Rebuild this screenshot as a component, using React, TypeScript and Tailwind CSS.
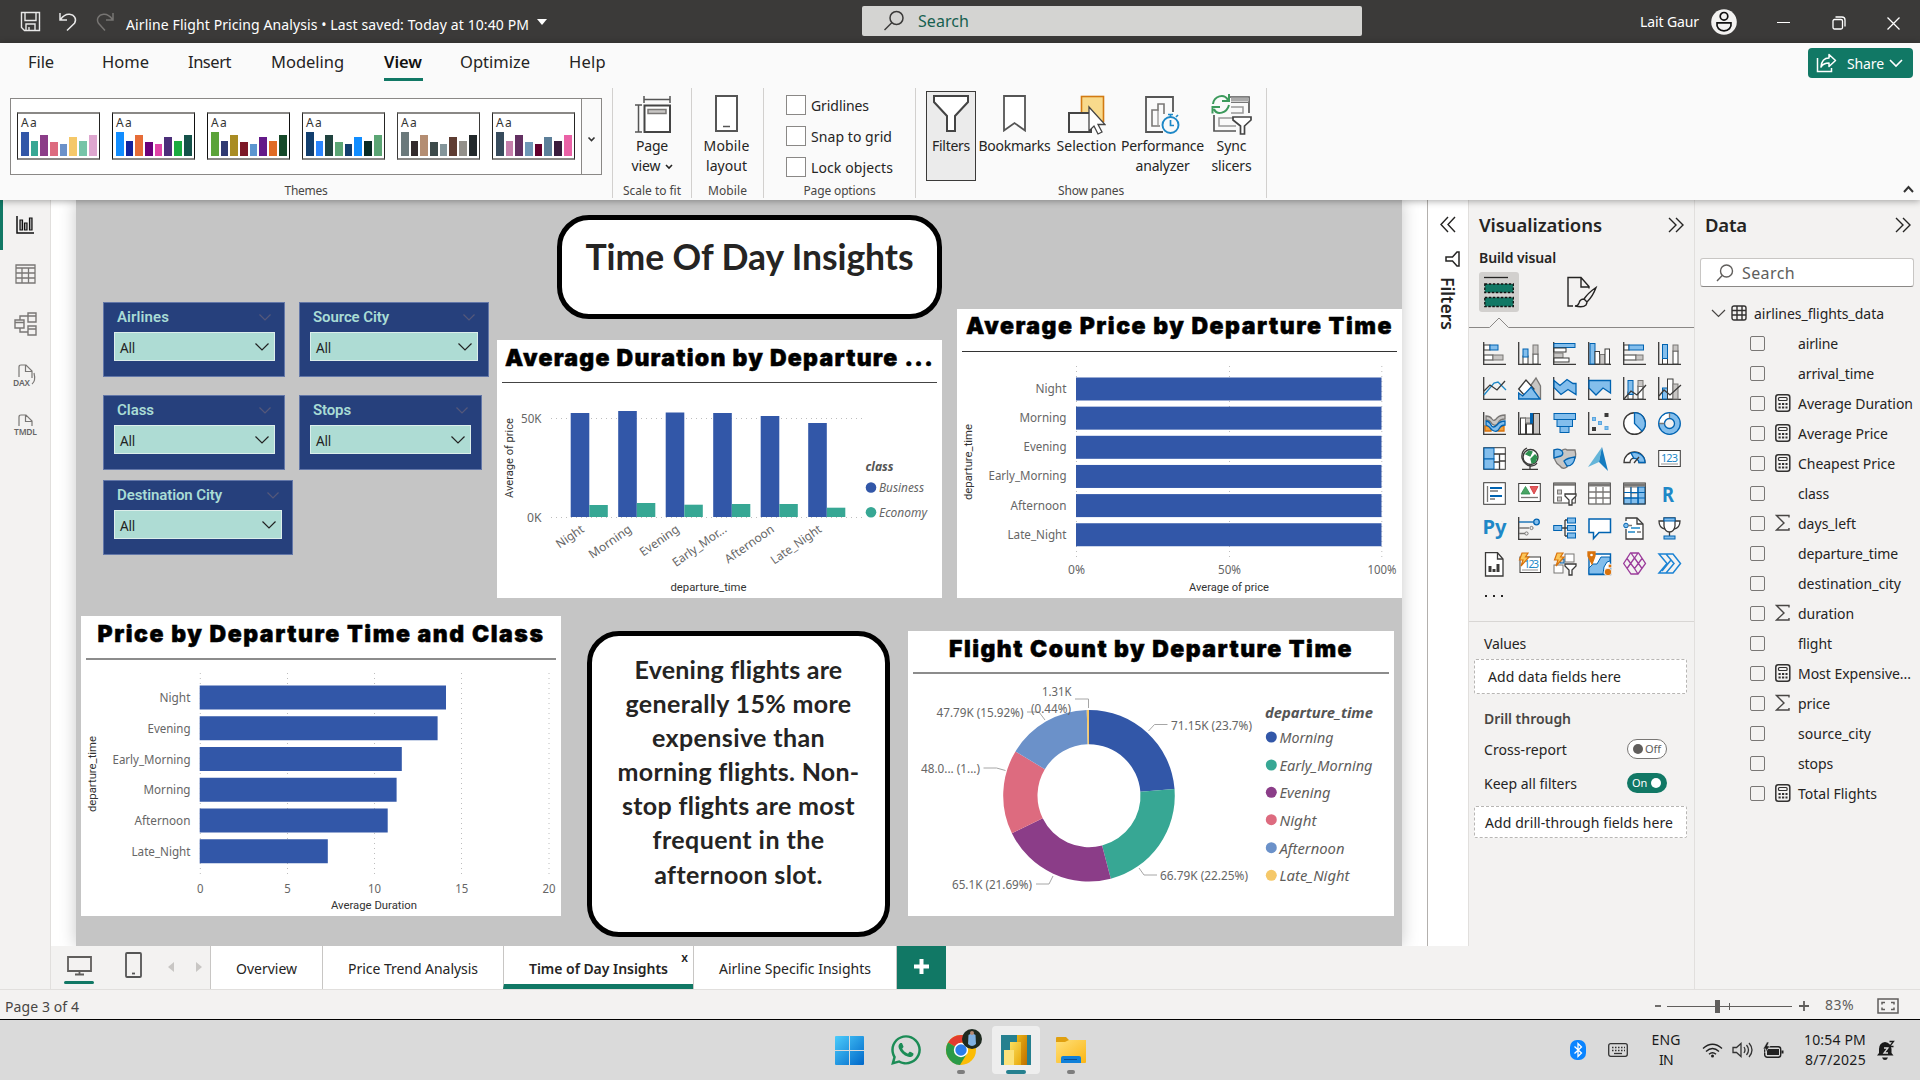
import React, { useLayoutEffect, useRef, useState } from "react";
import { FaWhatsapp } from "react-icons/fa";

const INK = "#3b3a39";
const BLUE = "#83beec";
const EDGE = "#0063b1";
const GREY = "#c8c6c4";
const MID = "#797775";

/* Text whose tracking is computed so that it fills a given width. */
function Fit({ w, className = "", children }: { w: number; className?: string; children: string }) {
  const ref = useRef<HTMLSpanElement>(null);
  const [ls, setLs] = useState(0);
  useLayoutEffect(() => {
    if (ref.current) setLs((w - ref.current.getBoundingClientRect().width) / children.length);
  }, [w, children]);
  return (
    <span ref={ref} className={"inline-block whitespace-pre " + className} style={{ letterSpacing: ls }}>
      {children}
    </span>
  );
}

/* ---------- title bar ---------- */
function TitleBar() {
  return (
    <header className="flex h-[43px] shrink-0 items-center bg-[#3b3a39] text-white">
      <svg className="ml-[20px]" width="21" height="21" viewBox="0 0 21 21" fill="none" stroke="#e8e8e8" strokeWidth="1.4">
        <path d="M1.5 1.5h18v18h-15l-3-3zM5 1.5v8h11v-8M6 19.500v-6.500h9v6.500M9 19v-3" />
      </svg>
      <svg className="ml-[17px]" width="20" height="21" viewBox="0 0 20 21" fill="none" stroke="#e8e8e8" strokeWidth="1.500">
        <path d="M2 2v7h7M2.500 8.500C5 5 8 3 11.500 3.300c5 .5 7.500 5 5 9L9 19.500" />
      </svg>
      <svg className="ml-[18px]" width="20" height="21" viewBox="0 0 20 21" fill="none" stroke="#777573" strokeWidth="1.500">
        <path d="M17 2v7h-7M16.500 8.500C14 5 11 3 7.500 3.300c-5 .5-7.500 5-5 9L9 19.500" />
      </svg>
      <Fit w={403} className="ml-[10px] mt-[6px] text-[14px] leading-5">Airline Flight Pricing Analysis • Last saved: Today at 10:40 PM</Fit>
      <span className="mt-px ml-[8px] h-0 w-0 border-x-[5px] border-t-[6px] border-x-transparent border-t-white" />
      <div className="mt-[-1px] ml-[315px] flex h-[30px] w-[500px] items-center rounded-[2px] bg-[#d4d4d2]">
        <svg className="ml-[21px]" width="22" height="22" viewBox="0 0 22 22" fill="none" stroke="#3b3a39" strokeWidth="1.500">
          <circle cx="13.500" cy="8" r="6.500" />
          <path d="M9 12.500L1.500 20" />
        </svg>
        <Fit w={51} className="ml-[13px] text-[16px] text-[#17604f]">Search</Fit>
      </div>
      <Fit w={59} className="ml-[278px] text-[14px]">Lait Gaur</Fit>
      <svg className="ml-[12px]" width="26" height="26" viewBox="0 0 26 26">
        <circle cx="13" cy="13" r="12.800" fill="#f3f2f1" />
        <circle cx="13" cy="7.300" r="3.800" fill="none" stroke="#111" strokeWidth="1.700" />
        <path d="M6 13.800h14c.8 4.800-2.500 8-7 8s-7.800-3.200-7-8z" fill="none" stroke="#111" strokeWidth="1.700" />
      </svg>
      <span className="mt-[2px] ml-[40px] h-[1.500px] w-[13px] bg-white" />
      <svg className="mt-[3px] ml-[42px]" width="14" height="14" viewBox="0 0 14 14" fill="none" stroke="#fff" strokeWidth="1.300">
        <rect x="1" y="3.500" width="9.500" height="9.500" rx="1.500" />
        <path d="M3.500 1h6.500a3 3 0 0 1 3 3v6.500" />
      </svg>
      <svg className="mt-[3px] ml-[41px]" width="13" height="13" viewBox="0 0 13 13" stroke="#fff" strokeWidth="1.300">
        <path d="M.5.5l12 12M12.500.5l-12 12" />
      </svg>
    </header>
  );
}

/* ---------- ribbon ---------- */
const themes = [
  { edge: "#252423", c: ["#3257a8", "#37a794", "#8b3d88", "#dd6b7f", "#6b91c9", "#f5c869", "#77c4a8", "#dea6cf"] },
  { edge: "#111", c: ["#118dff", "#12239e", "#e66c37", "#6b007b", "#e044a7", "#4c2f7a", "#1aab40", "#15524a"] },
  { edge: "#111", c: ["#5ba339", "#303a72", "#a98c23", "#7d1827", "#5c96d0", "#641a89", "#e06b24", "#16492a"] },
  { edge: "#252423", c: ["#123e6e", "#2b85ff", "#20433f", "#5ba574", "#123e6e", "#118dff", "#082b24", "#5ba574"] },
  { edge: "#3b3a39", c: ["#6b797b", "#332b2d", "#b48d72", "#3d4a4a", "#84959a", "#5e3c32", "#93908a", "#22282a"] },
  { edge: "#252423", c: ["#374b5c", "#c57eab", "#633062", "#6e97b6", "#63002d", "#5c7f99", "#3a1c3d", "#ea61a6"] },
];
const themeHeights = [24, 15, 21, 14, 12, 19, 15, 21];

function RibbonItem({ icon, width, lines, widths, active, caret }: { icon: React.ReactNode; width: string; lines: string[]; widths: number[]; active?: boolean; caret?: boolean }) {
  return (
    <div className={"mt-[3px] flex h-[90px] flex-col items-center " + width + (active ? " border border-[#3b3a39] bg-[#ebebeb]" : " pt-px")}>
      <div className="flex h-[44px] shrink-0 items-start justify-center pt-[3px]">{icon}</div>
      {lines.map((l, i) => (
        <span key={l} className="flex h-5 items-center whitespace-nowrap text-[14px] leading-5 text-[#252423]">
          <Fit w={widths[i]}>{l}</Fit>
          {caret && i === 1 && (
            <svg className="ml-[4px] mt-[2px]" width="8" height="6" viewBox="0 0 8 6" fill="none" stroke="#252423" strokeWidth="1.600"><path d="M1 1l3 3 3-3" /></svg>
          )}
        </span>
      ))}
    </div>
  );
}
function Group({ width, label, lw, children }: { width: string; label: string; lw: number; children: React.ReactNode }) {
  return (
    <div className={"flex h-[110px] shrink-0 flex-col border-r border-[#d2d0ce] " + width}>
      <div className="flex h-[95px] shrink-0">{children}</div>
      <div className="flex h-4 items-center justify-center text-[12px] leading-4 text-[#484644]"><Fit w={lw}>{label}</Fit></div>
    </div>
  );
}
const tabs: [string, number, string][] = [
  ["File", 26, "ml-[28px]"], ["Home", 47, "ml-[48px]"], ["Insert", 43, "ml-[39px]"], ["Modeling", 73, "ml-[40px]"],
  ["View", 38, "ml-[40px]"], ["Optimize", 70, "ml-[38px]"], ["Help", 37, "ml-[39px]"],
];
function Ribbon() {
  return (
    <section className="relative z-10 flex h-[157px] shrink-0 flex-col bg-[#fafafa] shadow-[0_1px_7px_rgba(0,0,0,0.35)]">
      <div className="flex h-[45px] shrink-0">
        {tabs.map(([t, w, ml]) => (
          <div key={t} className={"relative flex h-[38px] items-center " + ml}>
            <Fit w={w} className={"text-[16.500px] leading-[38px] " + (t === "View" ? "font-semibold text-[#111]" : "text-[#252423]")}>{t}</Fit>
            {t === "View" && <span className="absolute bottom-0 left-0 h-[3px] w-[39px] bg-[#117865]" />}
          </div>
        ))}
        <button className="mt-[5px] ml-auto mr-[7px] flex h-[30px] w-[105px] items-center rounded-[4px] bg-[#117865] text-white">
          <svg className="ml-[8px]" width="21" height="20" viewBox="0 0 21 20" fill="none" stroke="#fff" strokeWidth="1.500">
            <path d="M1.500 5v13.500h14V15" /><path d="M5 14c.5-6 3.500-9 8-9V1.500l6.500 6L13 13.500V10c-4 0-6.500 1.500-8 4z" strokeLinejoin="round" />
          </svg>
          <Fit w={37} className="ml-[10px] text-[14px]">Share</Fit>
          <svg className="ml-[5px]" width="14" height="9" viewBox="0 0 14 9" fill="none" stroke="#fff" strokeWidth="1.600"><path d="M1 1l6 6 6-6" /></svg>
        </button>
      </div>
      <div className="flex h-[112px]">
        <Group width="w-[613px]" label="Themes" lw={43}>
          <div className="mt-[10px] ml-[10px] flex h-[77px] w-[592px] border border-[#8a8886] bg-white">
            <div className="flex flex-1 gap-[12px] pt-[13px] pl-[6px]">
              {themes.map((t, i) => (
                <div key={i} className="flex h-[48px] w-[83px] shrink-0 flex-col border border-y-2 border-y-[#8a8886] bg-white pl-[3px]" style={{ borderLeftColor: t.edge, borderRightColor: t.edge }}>
                  <Fit w={17} className="h-[17px] self-start text-[12px] leading-[18px] text-[#333]">Aa</Fit>
                  <div className="flex h-[25px] items-end gap-[2px]">
                    {t.c.map((c, j) => <span key={j} className="w-[7.700px]" style={{ background: c, height: themeHeights[j] }} />)}
                  </div>
                </div>
              ))}
            </div>
            <div className="flex w-[20px] items-center justify-center border-l border-[#8a8886] bg-[#fafafa]">
              <svg className="mt-[6px]" width="9" height="7" viewBox="0 0 9 7" fill="none" stroke="#333" strokeWidth="1.600"><path d="M1.500 1.500l3 3 3-3" /></svg>
            </div>
          </div>
        </Group>
        <Group width="w-[79px]" label="Scale to fit" lw={58}>
          <RibbonItem width="w-[78px]" lines={["Page", "view"]} widths={[32, 29]} caret icon={
            <svg width="37" height="38" viewBox="0 0 37 38" fill="none" stroke="#555" strokeWidth="1.500">
              <path d="M10 1v7M36 1v7M10 4.500h26M1 10h7M1 37h7M4.500 10v27" />
              <rect x="10.500" y="10.500" width="25.500" height="26.500" stroke="#444" strokeWidth="2" fill="#fff" /><rect x="14" y="14.500" width="18" height="4" fill={GREY} stroke={MID} />
            </svg>} />
        </Group>
        <Group width="w-[72px]" label="Mobile" lw={39}>
          <RibbonItem width="w-[69px]" lines={["Mobile", "layout"]} widths={[46, 41]} icon={
            <svg width="23" height="37" viewBox="0 0 23 37" fill="#fff" stroke="#555" strokeWidth="2"><rect x="1" y="1" width="21" height="35" /><path d="M8 31.500h7" strokeWidth="1.500" /></svg>} />
        </Group>
        <Group width="w-[152px]" label="Page options" lw={72}>
          <div className="ml-[22px] flex flex-col gap-[11px] pt-[7px]">
            {([["Gridlines", 58], ["Snap to grid", 81], ["Lock objects", 82]] as [string, number][]).map(([t, w]) => (
              <div key={t} className="flex h-5 items-center gap-[5px] text-[14px] text-[#252423]">
                <span className="h-[20px] w-[20px] border border-[#8a8886] bg-white" />
                <Fit w={w}>{t}</Fit>
              </div>
            ))}
          </div>
        </Group>
        <Group width="w-[351px]" label="Show panes" lw={66}>
          <div className="flex pl-[10px]">
            <RibbonItem width="w-[50px]" active lines={["Filters"]} widths={[38]} icon={
              <svg width="36" height="37" viewBox="0 0 36 37" fill="#fff" stroke="#444" strokeWidth="2"><path d="M1 1h34v6L22 21v15h-8V21L1 7z" /></svg>} />
            <RibbonItem width="w-[77px]" lines={["Bookmarks"]} widths={[72]} icon={
              <svg width="23" height="37" viewBox="0 0 23 37" fill="#fff" stroke="#555" strokeWidth="1.800"><path d="M1 1h21v34.500l-10.500-7.500L1 35.500z" /></svg>} />
            <RibbonItem width="w-[67px]" lines={["Selection"]} widths={[60]} icon={
              <svg width="38" height="40" viewBox="0 0 38 40"><rect x="13.500" y="1.500" width="22" height="25" fill="#f8da8c" stroke="#d27a12" strokeWidth="1.600" />
                <rect x="1" y="18" width="22" height="19" fill="#fafafa" stroke="#444" strokeWidth="2" />
                <path d="M21 12v24l5-5 4 8 4-2-4-7.500h7z" fill="#fff" stroke="#444" strokeWidth="1.300" /></svg>} />
            <RibbonItem width="w-[85px]" lines={["Performance", "analyzer"]} widths={[83, 54]} icon={
              <svg width="36" height="40" viewBox="0 0 36 40" fill="none"><path d="M28 17V2H1v35h17" stroke="#555" strokeWidth="1.800" />
                <path d="M15 31H7V15h6V9h6v10" stroke={MID} strokeWidth="1.600" /><path d="M13 15v15" stroke={MID} />
                <circle cx="25.500" cy="30" r="8" stroke="#1e88c7" strokeWidth="1.900" /><path d="M25.500 25v5.500h3.500M23 19.500h5M25.500 20v2M31 22l2-2" stroke="#1e88c7" strokeWidth="1.700" /></svg>} />
            <RibbonItem width="w-[53px]" lines={["Sync", "slicers"]} widths={[30, 40]} icon={
              <svg className="mt-[-2px]" width="41" height="42" viewBox="0 0 41 42" fill="none"><path d="M19 4h19v16M3 22v16h22" stroke="#555" strokeWidth="1.700" /><path d="M20 6.500h18" stroke="#aaa" strokeWidth="4" /><path d="M20 9.500h18" stroke="#777" />
                <path d="M20 14h12v6H20M24 25H8v8h17" stroke="#999" strokeWidth="1.500" />
                <path d="M2 11C3 3 13 0 17 7M18 1v7h-7M18 12c-2 8-12 11-15 4M1.500 20.500V14H9" stroke="#3c9a5c" strokeWidth="2" />
                <path d="M22 24h18v3l-6.500 6v8h-4v-8L22 27z" fill="#fff" stroke="#444" strokeWidth="1.700" /></svg>} />
          </div>
        </Group>
        <svg className="mt-auto mr-[6px] mb-[7px] ml-auto" width="11" height="8" viewBox="0 0 11 8" fill="none" stroke="#333" strokeWidth="2"><path d="M1 7l4.500-5 4.500 5" /></svg>
      </div>
    </section>
  );
}

/* ---------- left navigation ---------- */
function LeftNav() {
  return (
    <nav className="flex w-[51px] shrink-0 flex-col border-r border-[#e1dfdd] bg-[#f3f2f1]">
      <div className="flex h-[50px] items-center border-l-[3px] border-[#117865] pl-[13px]">
        <svg width="18" height="18" viewBox="0 0 18 18" fill="none" stroke="#111" strokeWidth="1.500"><path d="M1 0v17h17" /><path d="M4 4h2.500v10H4zM8.500 7H11v7H8.500zM13.500 2H16v12h-2.500z" fill="#aaa" strokeWidth="1.200" /></svg>
      </div>
      <div className="flex h-[48px] items-center pl-[15px]">
        <svg width="21" height="20" viewBox="0 0 21 20" fill="none" stroke="#797775" strokeWidth="1.300"><path d="M1 1h19v18H1zM1 4h19M1 9h19M1 14h19M7 4v15M13.500 4v15" /></svg>
      </div>
      <div className="flex h-[52px] items-center pl-[14px]">
        <svg width="23" height="24" viewBox="0 0 23 24" fill="none" stroke="#797775" strokeWidth="1.400"><path d="M1 8h9v8H1zM14 1h8v9h-8zM14 14h8v9h-8zM1 10.500h9M14 4h8M14 17h8M6 8V4h8M6 16v4h8" /></svg>
      </div>
      <div className="flex h-[50px] items-center pl-[13px]">
        <svg width="24" height="23" viewBox="0 0 24 23" fill="none" stroke="#797775" strokeWidth="1.200"><path d="M6 13V3q0-2 2-2h5l6 6v7M12.500 1v6.500h6M21 9q2 8-2 11" />
          <text x="0" y="21.500" fontSize="8.500" textLength="17" fill="#666" stroke="none" className="font-['Noto_Sans'] font-semibold">DAX</text></svg>
      </div>
      <div className="flex h-[49px] items-center pl-[13px]">
        <svg width="25" height="22" viewBox="0 0 25 22" fill="none" stroke="#797775" strokeWidth="1.200"><path d="M6 12V3q0-2 2-2h5l6 6v5M12.500 1v6.500h6" />
          <text x="1" y="20.500" fontSize="8.500" textLength="23" fill="#666" stroke="none" className="font-['Noto_Sans'] font-semibold">TMDL</text></svg>
      </div>
    </nav>
  );
}

/* ---------- report canvas ---------- */
const SAX = "font-['Noto_Sans']";
const DIN = "font-['Roboto'] font-normal";

function Slicer({ pos, label, lw, field }: { pos: string; label: string; lw: number; field: string }) {
  return (
    <div className={"absolute h-[75px] border border-[#6377a8] bg-[#26407c] " + pos}>
      <div className="flex h-[29px] items-center justify-between pr-[13px] pl-[13px]">
        <Fit w={lw} className="font-['Roboto'] text-[15px] font-semibold text-[#a9dcd5]">{label}</Fit>
        <svg width="12" height="7" viewBox="0 0 12 7" fill="none" stroke="#55587a" strokeWidth="1.200"><path d="M.5.500L6 6l5.500-5.500" /></svg>
      </div>
      <div className={"ml-[10px] flex h-[29px] items-center justify-between border border-[#dceeeb] bg-[#aedcd4] px-[5px] " + field}>
        <Fit w={15} className="mt-[3px] font-['Noto_Sans'] text-[13.500px] text-[#222]">All</Fit>
        <svg width="14" height="8" viewBox="0 0 14 8" fill="none" stroke="#222" strokeWidth="1.200"><path d="M.5.500L7 7l6.500-6.500" /></svg>
      </div>
    </div>
  );
}
function VisualTitle({ children, w, className }: { children: string; w: number; className: string }) {
  return (
    <div className={"flex shrink-0 justify-center " + className}>
      <Fit w={w} className="font-['Inter'] text-[23px] leading-[30px] font-black text-black [-webkit-text-stroke:0.5px_#000]">{children}</Fit>
    </div>
  );
}
function Txt({ x, y, w, children, anchor = "start", size = 12, fill = "#666", cls = SAX, transform }: { x: number; y: number; w?: number; children: string; anchor?: "start" | "middle" | "end"; size?: number; fill?: string; cls?: string; transform?: string }) {
  return <text x={x} y={y} textLength={w} lengthAdjust="spacingAndGlyphs" textAnchor={anchor} fontSize={size} fill={fill} className={cls} transform={transform}>{children}</text>;
}
const dots = { stroke: "#bdbdbd", strokeDasharray: "1 4", strokeWidth: 1 };

function DurationChart() {
  const names: [string, number][] = [["Night", 31], ["Morning", 49], ["Evening", 45], ["Early_Mor...", 63], ["Afternoon", 57], ["Late_Night", 59]];
  const biz = [413, 411, 412.500, 413, 416, 423];
  const eco = [505, 503, 504.700, 504, 504, 507.700];
  return (
    <svg width="445" height="214" viewBox="497 384 445 214">
      <path d="M551 418.500H864M551 517.500H864" {...dots} />
      <Txt x={541.500} y={423} w={20.500} anchor="end">50K</Txt>
      <Txt x={541.500} y={522} w={14.500} anchor="end">0K</Txt>
      <Txt x={513} y={458} w={80} anchor="middle" size={11} fill="#333" cls={DIN} transform="rotate(-90 513 458)">Average of price</Txt>
      {names.map(([n, w], i) => (
        <g key={n}>
          <rect x={570.700 + 47.500 * i} y={biz[i]} width={18.600} height={517 - biz[i]} fill="#3257a8" />
          <rect x={589.300 + 47.500 * i} y={eco[i]} width={18.500} height={517 - eco[i]} fill="#37a794" />
          <Txt x={585 + 47.500 * i} y={531} w={w} anchor="end" transform={`rotate(-35 ${585 + 47.500 * i} 531)`}>{n}</Txt>
        </g>
      ))}
      <Txt x={708.500} y={591} w={76} anchor="middle" size={11} fill="#333" cls={DIN}>departure_time</Txt>
      <Txt x={865.500} y={471} w={28} size={12} fill="#555" cls="font-['Noto_Sans'] italic font-bold">class</Txt>
      <circle cx="871" cy="487.500" r="5.300" fill="#3257a8" />
      <Txt x={879} y={492} w={45} cls="font-['Noto_Sans'] italic">Business</Txt>
      <circle cx="871" cy="512.300" r="5.300" fill="#37a794" />
      <Txt x={879} y={517} w={48} cls="font-['Noto_Sans'] italic">Economy</Txt>
    </svg>
  );
}
function PriceChart() {
  const names: [string, number][] = [["Night", 31], ["Morning", 47], ["Evening", 43], ["Early_Morning", 78], ["Afternoon", 56], ["Late_Night", 59]];
  return (
    <svg width="445" height="246" viewBox="957 352 445 246">
      <path d="M1076.500 366V560M1229.500 366V560M1381.800 366V560" {...dots} />
      {names.map(([n, w], i) => (
        <g key={n}>
          <rect x={1076} y={377.500 + 29.150 * i} width={305.500} height={23} fill="#3257a8" />
          <Txt x={1066.500} y={393 + 29.150 * i} w={w} anchor="end">{n}</Txt>
        </g>
      ))}
      <Txt x={1076.500} y={574} w={17} anchor="middle">0%</Txt>
      <Txt x={1229.500} y={574} w={23} anchor="middle">50%</Txt>
      <Txt x={1382} y={574} w={29} anchor="middle">100%</Txt>
      <Txt x={1229} y={591} w={80} anchor="middle" size={11} fill="#333" cls={DIN}>Average of price</Txt>
      <Txt x={972} y={462} w={76} anchor="middle" size={11} fill="#333" cls={DIN} transform="rotate(-90 972 462)">departure_time</Txt>
    </svg>
  );
}
function ClassChart() {
  const rows: [string, number, number][] = [["Night", 31, 446], ["Evening", 43, 437.600], ["Early_Morning", 78, 401.800], ["Morning", 47, 396.600], ["Afternoon", 56, 387.700], ["Late_Night", 59, 327.800]];
  return (
    <svg width="480" height="256" viewBox="81 660 480 256">
      <path d="M200.300 673V878M287.500 673V878M374.500 673V878M461.500 673V878M549 673V878" {...dots} />
      {rows.map(([n, w, end], i) => (
        <g key={n}>
          <rect x={199.700} y={685.500 + 30.750 * i} width={end - 199.700} height={24} fill="#3257a8" />
          <Txt x={190.500} y={702 + 30.750 * i} w={w} anchor="end">{n}</Txt>
        </g>
      ))}
      {[0, 5, 10, 15, 20].map((v) => <Txt key={v} x={200.300 + 17.430 * v} y={892.500} w={v < 10 ? 6.500 : 13} anchor="middle">{String(v)}</Txt>)}
      <Txt x={374} y={909} w={86} anchor="middle" size={11} fill="#333" cls={DIN}>Average Duration</Txt>
      <Txt x={95.500} y={774} w={76} anchor="middle" size={11} fill="#333" cls={DIN} transform="rotate(-90 95.5 774)">departure_time</Txt>
    </svg>
  );
}
const slices: [string, string, number][] = [
  ["Morning", "#3257a8", 54], ["Early_Morning", "#37a794", 93], ["Evening", "#8b3d88", 51],
  ["Night", "#dd6b7f", 37], ["Afternoon", "#6b91c9", 65], ["Late_Night", "#f5c869", 70],
];
const SWEEP = [0, 85.5, 165.3, 244.0, 301.0, 358.5, 360];
function arc(a: number, b: number) {
  const cx = 1089, cy = 795.700, R = 85.800, r = 51.500;
  const p = (d: number, q: number) => `${cx + q * Math.sin((d * Math.PI) / 180)} ${cy - q * Math.cos((d * Math.PI) / 180)}`;
  return `M${p(a, R)}A${R} ${R} 0 0 1 ${p(b, R)}L${p(b, r)}A${r} ${r} 0 0 0 ${p(a, r)}Z`;
}
function DonutChart() {
  const legendY = [737, 765, 792.300, 819.700, 847.700, 875.300];
  return (
    <svg width="486" height="242" viewBox="908 674 486 242">
      {slices.map(([n, c, w], i) => (
        <g key={n}>
          <path d={arc(SWEEP[i], SWEEP[i + 1])} fill={c} />
          <circle cx="1271.300" cy={legendY[i]} r="5.500" fill={c} />
          <Txt x={1279.500} y={legendY[i] + 6} w={w} size={14} fill="#5f5e5c" cls="font-['Noto_Sans'] italic">{n}</Txt>
        </g>
      ))}
      <Txt x={1265} y={717.500} w={108} size={14} fill="#555" cls="font-['Noto_Sans'] italic font-bold">departure_time</Txt>
      <path d="M1148.500 731l6-6.500h13M1139 868l5 7h13M1053 876l-4 8h-13M1005.500 770.500l-9-2.500h-13M1045 720l-6-8h-12M1088.500 708v-9h-13.500" fill="none" stroke="#a6a6a6" />
      <Txt x={1171} y={730} w={81}>71.15K (23.7%)</Txt>
      <Txt x={1160} y={880} w={88}>66.79K (22.25%)</Txt>
      <Txt x={952} y={889} w={80}>65.1K (21.69%)</Txt>
      <Txt x={921} y={773} w={59}>48.0... (1...)</Txt>
      <Txt x={936.500} y={717} w={87}>47.79K (15.92%)</Txt>
      <Txt x={1042} y={696} w={29.500}>1.31K</Txt>
      <Txt x={1031} y={713} w={40}>(0.44%)</Txt>
    </svg>
  );
}
const note: [string, number][] = [
  ["Evening flights are", 208], ["generally 15% more", 226], ["expensive than", 173], ["morning flights. Non-", 242],
  ["stop flights are most", 233], ["frequent in the", 172], ["afternoon slot.", 168],
];
function Canvas() {
  return (
    <div className="flex min-w-0 flex-1 overflow-hidden bg-white">
      <div className="relative ml-[25px] h-[746px] w-[1326px] shrink-0 bg-[#c5c5c5] shadow-[0_0_16px_rgba(0,0,0,0.22)]">
        <Slicer pos="left-[27px] top-[102px] w-[182px]" label="Airlines" lw={52} field="w-[161px]" />
        <Slicer pos="left-[223px] top-[102px] w-[190px]" label="Source City" lw={76} field="w-[168px]" />
        <Slicer pos="left-[27px] top-[195px] w-[182px]" label="Class" lw={37} field="w-[161px]" />
        <Slicer pos="left-[223px] top-[195px] w-[183px]" label="Stops" lw={38} field="w-[161px]" />
        <Slicer pos="left-[27px] top-[280px] w-[190px]" label="Destination City" lw={105} field="w-[168px]" />

        <div className="absolute left-[481px] top-[15px] flex h-[104px] w-[385px] justify-center rounded-[32px] border-[5px] border-black bg-white pt-[15px]">
          <Fit w={328} className="font-['Lato'] text-[35.500px] leading-[44px] font-bold text-[#252423]">Time Of Day Insights</Fit>
        </div>

        <div className="absolute left-[421px] top-[140px] flex h-[258px] w-[445px] flex-col bg-white">
          <VisualTitle w={429} className="h-[42px] pt-[3px]">Average Duration by Departure ...</VisualTitle>
          <div className="mx-[5px] h-[2px] shrink-0 border-t border-[#444]" />
          <DurationChart />
        </div>
        <div className="absolute left-[881px] top-[109px] flex h-[289px] w-[445px] flex-col bg-white">
          <VisualTitle w={427} className="h-[42px] pt-[2px]">Average Price by Departure Time</VisualTitle>
          <div className="mx-[5px] h-px shrink-0 bg-[#333]" />
          <PriceChart />
        </div>
        <div className="absolute left-[5px] top-[416px] flex h-[300px] w-[480px] flex-col bg-white">
          <VisualTitle w={447} className="h-[42px] pt-[3px]">Price by Departure Time and Class</VisualTitle>
          <div className="mx-[5px] h-[2px] shrink-0 bg-[#8c8c8c]" />
          <ClassChart />
        </div>
        <div className="absolute left-[511px] top-[431px] flex h-[306px] w-[303px] flex-col items-center rounded-[32px] border-[5px] border-black bg-white pt-[16px]">
          {note.map(([t, w]) => <Fit key={t} w={w} className="h-[34.100px] font-['Lato'] text-[25px] leading-[34.100px] font-bold text-[#252423]">{t}</Fit>)}
        </div>
        <div className="absolute left-[832px] top-[431px] flex h-[285px] w-[486px] flex-col bg-white">
          <VisualTitle w={404} className="h-[41px] pt-[3px]">Flight Count by Departure Time</VisualTitle>
          <div className="mx-[5px] h-[2px] shrink-0 bg-[#8c8c8c]" />
          <DonutChart />
        </div>
      </div>
    </div>
  );
}
function PageTabs() {
  return (
    <div className="flex h-[43px] shrink-0 bg-[#f3f2f1] text-[14px] text-[#252423]">
      <div className="flex w-[159px] shrink-0">
        <div className="ml-[13px] flex w-[30px] flex-col items-center pt-[9px]">
          <svg width="25" height="21" viewBox="0 0 25 21" fill="none" stroke="#605e5c" strokeWidth="1.800"><path d="M1 2h23v14H1zM8 19.500h9M12.500 16v3" /></svg>
          <span className="mt-[5px] h-[3px] w-[30px] rounded bg-[#117865]" />
        </div>
        <svg className="mt-[6px] ml-[31px]" width="17" height="26" viewBox="0 0 17 26" fill="none" stroke="#555" strokeWidth="1.800"><rect x="1" y="1" width="15" height="24" rx="1" /><path d="M7 21.500h3" /></svg>
        <span className="mt-[16px] ml-[26px] h-0 w-0 border-y-[5.500px] border-r-[6px] border-y-transparent border-r-[#c8c6c4]" />
        <span className="mt-[16px] ml-[22px] h-0 w-0 border-y-[5.500px] border-l-[6px] border-y-transparent border-l-[#c8c6c4]" />
      </div>
      <div className="flex w-[112px] shrink-0 items-center justify-center border-l border-[#c8c6c4] bg-white pt-[2px]"><Fit w={61}>Overview</Fit></div>
      <div className="flex w-[181px] shrink-0 items-center justify-center border-l border-[#c8c6c4] bg-white pt-[2px]"><Fit w={130}>Price Trend Analysis</Fit></div>
      <div className="relative flex w-[190px] shrink-0 items-center justify-center border-b-[5px] border-l border-b-[#117865] border-l-[#c8c6c4] bg-white pt-[7px]">
        <Fit w={139} className="font-semibold">Time of Day Insights</Fit>
        <span className="absolute top-[4px] right-[5px] text-[12px] leading-4 font-semibold">x</span>
      </div>
      <div className="flex w-[204px] shrink-0 items-center justify-center border-x border-[#c8c6c4] bg-white pt-[2px]"><Fit w={152}>Airline Specific Insights</Fit></div>
      <div className="flex w-[49px] shrink-0 items-center justify-center bg-[#117865]">
        <svg className="mb-[3px]" width="15" height="15" viewBox="0 0 15 15"><path d="M5.500 0h4v5.500H15v4H9.500V15h-4V9.500H0v-4h5.500z" fill="#fff" /></svg>
      </div>
    </div>
  );
}
function FiltersPane() {
  return (
    <aside className="flex w-[42px] shrink-0 flex-col items-center border-x border-l-[#b3b0ad] border-r-[#e1dfdd] bg-white">
      <svg className="mt-[16px]" width="16" height="17" viewBox="0 0 16 17" fill="none" stroke="#252423" strokeWidth="1.400"><path d="M8 1L1 8.500 8 16M15 1L8 8.500l7 7.500" /></svg>
      <svg className="mt-[18px] ml-[8px]" width="15" height="16" viewBox="0 0 15 16" fill="none" stroke="#252423" strokeWidth="1.500"><path d="M14 1v14h-2L7.500 10H1V6h6.500L12 1z" /></svg>
      <span className="mt-[10px] h-[54px] [writing-mode:vertical-rl] text-[17.500px] leading-6 font-semibold whitespace-nowrap text-[#252423]">Filters</span>
    </aside>
  );
}

/* ---------- visualization gallery ---------- */
const R = (x: number, y: number, w: number, h: number, fill: string, stroke = INK) => <rect x={x} y={y} width={w} height={h} fill={fill} stroke={stroke} />;
const L = (d: string, stroke = INK, fill = "none", sw = 1.3) => <path d={d} stroke={stroke} fill={fill} strokeWidth={sw} />;
const axes = L("M.7 0v22.300H23");
const bolt = L("M4 1h6L7.500 5H11L3 14l2-6H1.500z", "#d9730d", "#fbc658", 1.2);
const W = "#fff";
const gallery: React.ReactNode[] = [
  <>{axes}{R(1, 3, 6, 5, W)}{R(7, 3, 8, 5, BLUE, EDGE)}{R(1, 13, 9, 5, W)}{R(10, 13, 10, 5, GREY, MID)}</>,
  <>{axes}{R(5, 14, 5, 8, W)}{R(5, 7, 5, 8, BLUE, EDGE)}{R(15, 12, 5, 10, W)}{R(15, 3, 5, 9, GREY, MID)}</>,
  <>{axes}{R(1, 1.500, 21, 4, BLUE, EDGE)}{R(1, 6, 12, 4, W)}{R(1, 11, 9, 5, GREY, MID)}{R(1, 16, 15, 4, W)}</>,
  <>{axes}{R(2, 1.500, 5, 20.500, BLUE, EDGE)}{R(7, 9.500, 4.500, 12.500, W)}{R(12, 12.500, 5, 9.500, GREY, MID)}{R(17, 7, 4.500, 15, W)}</>,
  <>{axes}{R(1, 3, 5, 5, W)}{R(6, 3, 14.500, 5, BLUE, EDGE)}{R(1, 13, 12, 5, W)}{R(13, 13, 7, 5, GREY, MID)}</>,
  <>{axes}{R(4.500, 16, 5, 6, W)}{R(4.500, 2.500, 5, 14, BLUE, EDGE)}{R(15, 9, 5, 13, W)}{R(15, 3, 5, 6, GREY, MID)}</>,
  <>{axes}{L("M1 18L11 6l4-1 4 4 4 4", "#1e88c7")}{L("M1 14l6-6 7 5 8-9")}</>,
  <>{L("M13 21.500V8L18 1l4.500 8v12.500z", MID, GREY)}{L("M.7 12L8 3l8 9-8 8z", INK, W)}{L("M.7 22V16l4 3 8.500-9L22 22z", EDGE, BLUE)}</>,
  <>{axes}{L("M1 3.500l6 5 7-6 6 4h3v11l-8-5-7 5-7-7z", EDGE, BLUE)}</>,
  <>{axes}{L("M1 3.500h21.500V16L15 11 8 18 1 11z", EDGE, BLUE)}</>,
  <>{axes}{R(5, 15, 5, 7, W)}{R(5, 3.500, 5, 14, BLUE, EDGE)}{R(15, 9, 5, 13, W)}{R(15, 3.500, 5, 6, GREY, MID)}{L("M1 22L8 14l6 4 9-10")}</>,
  <>{axes}{R(4.500, 11, 5, 11, BLUE, EDGE)}{R(9.500, 2, 5.500, 20, W)}{R(15, 7, 5, 15, GREY, MID)}{L("M1 19L6 13l6 5 11-10")}</>,
  <>{L("M3 4q4 0 6 3t5-1q3-3 8-3v4q-5 0-7 4t-6 1q-2-4-6-4z", MID, GREY)}{L("M2 14h6v5H2zM15 14h6v5h-6z", "#d9730d", "#f0a03c")}{L("M3 9q3 0 5 4t6 0q3-4 8-4v4q-4 0-6 4t-7 1q-3-4-6-5z", EDGE, BLUE)}{axes}</>,
  <>{axes}{R(2.500, 6, 5, 16, W)}{R(7.500, 6, 5, 5, GREY, MID)}{R(12.500, 1.500, 3, 10, EDGE, EDGE)}{R(15.500, 1.500, 6, 20.500, GREY)}{R(8.500, 12, 6, 10, W)}</>,
  <>{R(1, 1.500, 21.500, 6, BLUE, EDGE)}{R(4, 7.500, 15.500, 7, BLUE, EDGE)}{R(7, 14.500, 9, 6, BLUE, EDGE)}</>,
  <>{axes}{R(17, 1.500, 3, 3, INK)}{R(4.500, 5.500, 3, 3, BLUE, "#5ba7e0")}{R(10.500, 9.500, 3, 3, BLUE, "#5ba7e0")}{R(17, 14.500, 3, 3, BLUE, "#5ba7e0")}{R(4.500, 15.500, 3, 3, INK)}</>,
  <><circle cx="11.500" cy="11.500" r="10.800" fill={W} stroke={INK} strokeWidth="1.400" />{L("M11.500.7A10.800 10.800 0 0 1 19 19.200L11.500 11.500z", EDGE, BLUE)}</>,
  <><circle cx="11.500" cy="11.500" r="8" stroke={BLUE} strokeWidth="6" fill="none" />{L("M11.500 3.500a8 8 0 0 0-8 8", W, "none", 5)}<circle cx="11.500" cy="11.500" r="10.800" fill="none" stroke={EDGE} strokeWidth="1.300" /><circle cx="11.500" cy="11.500" r="5" fill="none" stroke={EDGE} strokeWidth="1.300" />{L("M1 11.500h5.500M11.500 1v5", MID)}</>,
  <>{R(.7, .7, 21.600, 21.600, W)}{R(1, 1, 10, 11, BLUE, EDGE)}{R(1, 12, 10, 10, BLUE, EDGE)}{L("M11 7h11.500M16.500 7v15.500M11 15h5.500M16.500 14h6")}</>,
  <><circle cx="12.500" cy="10" r="7.500" fill={W} stroke={INK} strokeWidth="1.400" />{L("M8 7l3-3 3 1-2 4zM13 12l4-4 2 2-2 5-3 1z", "#2f9150", "#2f9150")}{L("M9 1Q3 4 4 11q2 7 9 8 4 0 6-3M12 19v3M4 22.300h16")}</>,
  <>{L("M1 3q5-1 7 1 4-3 6-1h8q2 8-2 11-6 3-6 6-4 3-7-1Q0 15 1 3z", MID, GREY)}{L("M1 3q5-2 8 1 2 3-1 5-4 1-7 2zM11 14q3-3 11-4-1 9-8 9z", EDGE, BLUE)}</>,
  <>{L("M14 0L0 20l11-5z", "none", "#64b5d9")}{L("M14 0l6 24-9-9z", "none", "#147cc0")}</>,
  <>{L("M1 15.500a10.500 10.500 0 0 1 21 0h-6a4.500 4.500 0 0 0-9 0z", INK, W)}{L("M8 6a10.500 10.500 0 0 1 14 9.500h-6a4.500 4.500 0 0 0-5-4z", EDGE, BLUE)}{L("M11 16l5-6")}</>,
  <>{R(.7, 3.500, 21.600, 16, W)}<text x="3" y="14.500" fontSize="11" textLength="17" fill="#1e88c7" className={SAX}>123</text>{L("M3 17h17", MID, "none", .8)}</>,
  <>{R(.7, .7, 21.600, 21.600, W)}{L("M4.500 4v16", MID)}{L("M7 6h12M7 14h12", EDGE, "none", 2)}{L("M7 9h8M7 17h5", MID)}</>,
  <>{R(.7, 1.500, 21.600, 18, W)}{L("M3 12l4.500-7.500L12 12z", "#2f9150", "#4aa564", .8)}{L("M12 4.500h8L16 12z", "#d13438", "#e35b5b", .8)}{L("M3 15.500h17", MID)}</>,
  <>{R(.7, 1, 21.600, 20, W)}{L("M1 2.500h21", MID, "none", 2.500)}{R(4.500, 8, 4, 4, GREY, MID)}{R(4.500, 15, 4, 4, GREY, MID)}{L("M12 12h11v2l-4 4v5h-3v-5l-4-4z", INK, W)}</>,
  <>{R(.7, 1, 21.600, 21, W)}{L("M1 3h21", MID, "none", 3)}{L("M1 10h21M1 16h21M8 5v17M15 5v17", MID)}</>,
  <>{R(1, 5, 7, 11, W, MID)}{R(8, 5, 7, 6, W, MID)}{R(15, 5, 7, 17, BLUE, EDGE)}{R(1, 16, 14, 6, BLUE, EDGE)}{R(.7, 1, 21.600, 21, "none")}{L("M1 3h21", MID, "none", 3)}{L("M8 5v17M15 5v17M1 10.500h21M1 16h21", EDGE, "none", 1)}</>,
  <text x="4" y="19.500" fontSize="21" textLength="12" lengthAdjust="spacingAndGlyphs" fill="#1e88c7" className="font-['Noto_Sans'] font-bold">R</text>,
  <text x="-.5" y="17" fontSize="20" textLength="24" lengthAdjust="spacingAndGlyphs" fill="#1e88c7" className="font-['Noto_Sans'] font-bold">Py</text>,
  <>{axes}{L("M1 5h14", EDGE)}<circle cx="18.500" cy="5" r="2.800" fill={BLUE} stroke={EDGE} strokeWidth="1.300" />{L("M1 11h10M1 16.500h6", MID)}<circle cx="13.500" cy="11" r="1.600" fill="none" stroke={MID} /><circle cx="8.500" cy="16.500" r="1.600" fill="none" stroke={MID} /></>,
  <>{L("M9 11h6M12 3v16M12 3h3M12 19h3")}{R(.7, 8.500, 8, 5, BLUE, EDGE)}{R(14.500, 1, 8, 5, BLUE, EDGE)}{R(14.500, 8.500, 8, 5, BLUE, EDGE)}{R(14.500, 16, 8, 5, BLUE, EDGE)}</>,
  <>{L("M1 2h21.500v13.500H11l-5.500 6v-6H1z", EDGE, W, 1.500)}</>,
  <>{L("M3 4V1h11l6 6v15H3V12", INK, W)}{L("M14 1v6h6", INK)}<circle cx="3" cy="8.500" r="2.300" fill={BLUE} stroke={EDGE} />{L("M8 11h9M5 15h7", "#1e88c7")}{L("M14 15h4M5 8.500h4", MID)}</>,
  <>{L("M6 4H1q0 7 6 8M17 4h5q0 7-6 8M11.500 15v4", INK, W)}{L("M6 1h11v8q-1 6-5.500 6T6 9z", INK, W)}{R(6, 1, 11, 3, BLUE, EDGE)}{R(6, 19, 11, 3, BLUE, EDGE)}</>,
  <>{L("M2.500.700h12L20 7v17H2.500z", INK, W)}{L("M14.500 1v6H20", INK)}{L("M7 14v6M11 17v3M15 12v8", INK, "none", 3)}</>,
  <>{R(2, 5, 20.500, 15.500, W)}{L("M4 18h16", MID, "none", .8)}<text x="6" y="16" fontSize="10.500" textLength="15" fill="#1e88c7" className={SAX}>123</text>{bolt}</>,
  <>{R(12, 2, 9, 8, W, MID)}{R(1, 13, 9, 8, W, MID)}{R(7, 7, 4, 4, GREY, EDGE)}{bolt}{L("M12 12h11v2l-4 4v5h-3v-5l-4-4z", INK, W)}</>,
  <>{L("M1 2h21.500v20.500H1z", EDGE, "#fff", 1.400)}{L("M1 22V16l4-4h4l4-7h9v4l-3 1-3 5-1 7z", EDGE, BLUE, 1)}{L("M4 12L0 4V0h7v4z", "#d9730d", "#d9730d")}<circle cx="3.500" cy="3" r="1.300" fill="#fff" /><circle cx="22" cy="14" r="2" fill="#d9730d" stroke="#f3f2f1" /><circle cx="20" cy="20" r="3.800" fill="#d9730d" stroke="#f3f2f1" /></>,
  <g fill="none" stroke="#9b3c9b" strokeWidth="1.300"><path d="M7.500 1h8L22.500 11.500 15 22H8L.7 11.500zM4 6.500l7.500 10M19 6.500l-7.500 10L15 22M11.500 6L19 16.500M11.500 6L4 16.500M8 1l3.500 5L15 1" /></g>,
  <g fill="none" stroke="#1b83d4" strokeWidth="1.500"><path d="M1 2h14l7.500 9.500L15 21H1l8-9.500zM8 2l8 9.500L8 21M13 8L4 19" /></g>,
];
function Toggle({ on }: { on?: boolean }) {
  return on ? (
    <span className="flex h-[20px] w-[40px] items-center justify-between rounded-full bg-[#117865] pr-[6px] pl-[5px] text-[11px] text-white"><Fit w={15}>On</Fit><span className="h-[10px] w-[10px] rounded-full bg-white" /></span>
  ) : (
    <span className="flex h-[20px] w-[40px] items-center justify-between rounded-full border border-[#797775] bg-white pr-[5px] pl-[5px] text-[11px] text-[#605e5c]"><span className="h-[10px] w-[10px] rounded-full bg-[#605e5c]" /><Fit w={16}>Off</Fit></span>
  );
}
const DoubleRight = () => <svg width="16" height="16" viewBox="0 0 16 16" fill="none" stroke="#252423" strokeWidth="1.400"><path d="M1 1l7 7-7 7M8 1l7 7-7 7" /></svg>;

function VisualizationsPane() {
  return (
    <aside className="flex w-[226px] shrink-0 flex-col border-r border-[#e1dfdd] bg-[#f3f2f1] text-[14px] text-[#252423]">
      <div className="flex h-[49px] shrink-0 items-center justify-between pr-[10px] pl-[10px]">
        <Fit w={123} className="text-[18.500px] font-semibold">Visualizations</Fit><DoubleRight />
      </div>
      <div className="flex h-[23px] shrink-0 items-center pl-[10px]"><Fit w={77} className="mb-[6px] font-semibold">Build visual</Fit></div>
      <div className="flex h-[40px] shrink-0 pl-[10px]">
        <div className="flex h-[40px] w-[40px] items-center justify-center rounded-[3px] bg-[#d2d0ce]">
          <svg width="30" height="32" viewBox="0 0 30 32" fill="#117865"><path d="M0 1.500h24" stroke="#252423" strokeWidth="1.300" /><rect x=".8" y="8" width="28.500" height="8.500" stroke="#111" strokeWidth="1.300" strokeDasharray="2.500 1.500" /><rect x=".8" y="21.500" width="28.500" height="9" stroke="#111" strokeWidth="1.300" strokeDasharray="2.500 1.500" /></svg>
        </div>
        <svg className="mt-[4px] ml-[47px]" width="32" height="32" viewBox="0 0 32 32" fill="none" stroke="#252423" strokeWidth="1.400">
          <path d="M7 30H2V1.500h13l8 9v2M15 1.500v9.500h8" /><path d="M30 11.500Q22 17 18 23l3 3q6-6 9-14.500zM18 23q-4 0-5 4-1 3-4 3 8 2 11-1 1-2 1-3z" />
        </svg>
      </div>
      <svg className="mt-[5px] shrink-0" width="225" height="12" viewBox="0 0 225 12" fill="none" stroke="#8a8886"><path d="M0 10.500h20.500l9.500-9.500 9.500 9.500H225" /></svg>
      <div className="mt-[13px] grid shrink-0 grid-cols-[repeat(6,23px)] gap-x-[12px] gap-y-[12px] pl-[14px]">
        {gallery.map((g, i) => <svg key={i} width="23" height="23" viewBox="0 0 23 23" className="overflow-visible">{g}</svg>)}
      </div>
      <div className="mt-[20px] flex h-[2px] shrink-0 gap-[6px] pl-[16px]">{[0, 1, 2].map((i) => <span key={i} className="h-[2px] w-[2px] bg-[#252423]" />)}</div>
      <div className="mt-[24px] shrink-0 border-t border-[#d8d6d4]" />
      <div className="flex h-[37px] shrink-0 items-center pt-[6px] pl-[15px]"><Fit w={42}>Values</Fit></div>
      <div className="mx-[5px] flex h-[35px] w-[213px] shrink-0 items-center rounded-[2px] border border-dashed border-[#b8b6b4] bg-white pl-[13px]"><Fit w={133}>Add data fields here</Fit></div>
      <div className="mt-[13px] flex h-[22px] shrink-0 items-center pl-[15px] text-[#484644]"><Fit w={87} className="font-semibold">Drill through</Fit></div>
      <div className="mt-[9px] flex h-[22px] shrink-0 items-center justify-between pr-[27px] pl-[15px]"><Fit w={83}>Cross-report</Fit><Toggle /></div>
      <div className="mt-[12px] flex h-[22px] shrink-0 items-center justify-between pr-[27px] pl-[15px]"><Fit w={93}>Keep all filters</Fit><Toggle on /></div>
      <div className="mx-[5px] mt-[12px] flex h-[32px] w-[213px] shrink-0 items-center rounded-[2px] border border-dashed border-[#b8b6b4] bg-white pl-[10px]"><Fit w={188}>Add drill-through fields here</Fit></div>
    </aside>
  );
}

/* ---------- data pane ---------- */
const Calc = () => (
  <svg width="16" height="18" viewBox="0 0 16 18" fill="none" stroke="#323130" strokeWidth="1.500"><rect x=".8" y=".8" width="14" height="16.400" rx="2.500" /><rect x="3.500" y="3.500" width="8.600" height="3" rx="1" strokeWidth="1.200" />
    <path d="M3.500 10h9M3.500 13.500h9" strokeWidth="2.200" strokeDasharray="2.200 1.300" /></svg>
);
const Sigma = () => <svg width="16" height="18" viewBox="0 0 16 18" fill="none" stroke="#484644" strokeWidth="1.400"><path d="M14 3.500V1.500H1.500L9 9l-7.500 7H14V14" /></svg>;
const fields: [string, number, string?][] = [
  ["airline", 40], ["arrival_time", 76], ["Average Duration", 115, "c"], ["Average Price", 90, "c"], ["Cheapest Price", 97, "c"], ["class", 31],
  ["days_left", 58, "s"], ["departure_time", 100], ["destination_city", 103], ["duration", 56, "s"], ["flight", 34], ["Most Expensive...", 113, "c"],
  ["price", 32, "s"], ["source_city", 73], ["stops", 35], ["Total Flights", 79, "c"],
];
function DataPane() {
  return (
    <aside className="flex w-[225px] shrink-0 flex-col bg-[#f3f2f1] text-[14px] text-[#252423]">
      <div className="flex h-[49px] shrink-0 items-center justify-between pr-[9px] pl-[10px]"><Fit w={42} className="text-[18.500px] font-semibold">Data</Fit><DoubleRight /></div>
      <div className="mt-[9px] ml-[5px] flex h-[29px] w-[214px] shrink-0 items-center rounded-[3px] border border-[#c8c6c4] border-b-[#8a8886] bg-white text-[#605e5c]">
        <svg className="ml-[15px]" width="18" height="18" viewBox="0 0 18 18" fill="none" stroke="#605e5c" strokeWidth="1.400"><circle cx="10.500" cy="7" r="6" /><path d="M6.200 11.500L1 17" /></svg>
        <Fit w={53} className="mt-px ml-[8px] text-[16px]">Search</Fit>
      </div>
      <div className="mt-[11px] flex h-[30px] shrink-0 items-center">
        <svg className="ml-[16px]" width="15" height="9" viewBox="0 0 15 9" fill="none" stroke="#484644" strokeWidth="1.200"><path d="M1 1l6.500 6.500L14 1" /></svg>
        <svg className="ml-[5px]" width="16" height="16" viewBox="0 0 16 16" fill="none" stroke="#323130" strokeWidth="1.400"><rect x="1" y="1" width="14" height="14" rx="2" /><path d="M1 5.500h14M1 10h14M6 1v14M11 1v14" /></svg>
        <Fit w={130} className="ml-[7px]">airlines_flights_data</Fit>
      </div>
      {fields.map(([n, w, k]) => (
        <div key={n} className="flex h-[30px] shrink-0 items-center pl-[55px]">
          <span className="h-[15px] w-[15px] rounded-[2px] border border-[#797775]" />
          <span className="ml-[10px] flex w-[23px] items-center">{k === "c" ? <Calc /> : k === "s" ? <Sigma /> : null}</span>
          <Fit w={w}>{n}</Fit>
        </div>
      ))}
    </aside>
  );
}

function StatusBar() {
  return (
    <footer className="flex h-[30px] shrink-0 items-center border-b border-black bg-[#f3f2f1] text-[#605e5c]">
      <Fit w={74} className="mt-[4px] ml-[5px] text-[14px] text-[#484644]">Page 3 of 4</Fit>
      <svg className="mt-[2px] ml-[1575px]" width="156" height="20" viewBox="1654 995 156 20" stroke="#605e5c" fill="none"><path d="M1655 1005h6" strokeWidth="1.800" /><path d="M1667 1005.500h125M1729.500 1002v7" /><path d="M1717.500 999v13" strokeWidth="5" /><path d="M1799 1005h10M1804 1000v10" strokeWidth="1.800" /></svg>
      <Fit w={29} className="ml-[15px] text-[14px]">83%</Fit>
      <svg className="mt-[2px] ml-[23px]" width="22" height="16" viewBox="0 0 22 16" fill="none" stroke="#605e5c" strokeWidth="1.500"><path d="M1 1h20v14H1zM5 6.500V4.500h3M14 4.500h3v2M5 9.500v2h3M14 11.500h3v-2" /></svg>
    </footer>
  );
}

/* ---------- taskbar ---------- */
function Slot({ children, mark }: { children: React.ReactNode; mark?: string }) {
  return (
    <div className="relative flex h-[60px] w-[55px] items-center justify-center">
      {children}
      {mark && <span className={"absolute bottom-[6px] h-[4px] rounded-full " + mark} />}
    </div>
  );
}
function Taskbar() {
  return (
    <footer className="flex h-[60px] shrink-0 items-center bg-[#dadada] text-[#1a1a1a]">
      <div className="ml-[823px] flex">
        <Slot><svg className="mr-[3px]" width="29" height="29" viewBox="0 0 29 29"><defs><linearGradient id="win" x1="0" y1="0" x2="1" y2="1"><stop stopColor="#4bccfb" /><stop offset="1" stopColor="#0067c9" /></linearGradient></defs><path d="M1 0h13v14H0V1q0-1 1-1zM15 0h13q1 0 1 1v13H15zM0 15h14v14H1q-1 0-1-1zM15 15h14v13q0 1-1 1H15z" fill="url(#win)" /></svg></Slot>
        <Slot><FaWhatsapp className="h-[34px] w-[34px] text-[#1c8c56]" /></Slot>
        <Slot mark="w-[8px] bg-[#7d7d7d]">
          <svg className="overflow-visible" width="30" height="30" viewBox="0 0 30 30"><circle cx="15" cy="15" r="15" fill="#fbbc05" /><path d="M15 15L2 7.500A15 15 0 0 1 28 7.500H15z" fill="#e33b2e" /><path d="M2 7.500A15 15 0 0 0 14 30l7-11.500-6-3.500z" fill="#2a9a48" />
            <circle cx="15" cy="15" r="7.200" fill="#fff" /><circle cx="15" cy="15" r="5.700" fill="#2b7de9" /><circle cx="26" cy="4" r="10" fill="#1e2a20" /><path d="M22.500 0q3.500-3 7 0l.5 9q-4 4-8 0z" fill="#7fb0e0" /><circle cx="26" cy="-2" r="2" fill="#b58a74" /></svg>
        </Slot>
        <Slot mark="w-[20px] bg-[#25808f]">
          <div className="flex h-[48px] w-[48px] items-center justify-center rounded-[4px] bg-[#eeeeee]">
            <svg width="30" height="30" viewBox="0 0 30 30"><defs><linearGradient id="pa" x1="0" y1="0" x2="1" y2="1"><stop stopColor="#eab313" /><stop offset="1" stopColor="#c07000" /></linearGradient><linearGradient id="pb" x1="0" y1="0" x2="1" y2="1"><stop stopColor="#fbdf60" /><stop offset="1" stopColor="#e8a90c" /></linearGradient></defs><path d="M0 0h30v30H0z" fill="#25808f" /><path d="M16 0h10v30H16z" fill="url(#pa)" /><path d="M9 7h11v23H9z" fill="url(#pb)" /><path d="M3 15h10v15H3z" fill="#fbe27a" /></svg>
          </div>
        </Slot>
        <Slot mark="w-[8px] bg-[#7d7d7d]">
          <svg width="30" height="28" viewBox="0 0 30 28"><defs><linearGradient id="fo" x1="0" y1="0" x2="1" y2="1"><stop stopColor="#ffe07a" /><stop offset="1" stopColor="#fbb614" /></linearGradient></defs><path d="M0 2q0-1 1-1h9l3 3h16q1 0 1 1v6H0z" fill="#e0a010" /><path d="M0 6h9l4-2h17v22q0 1-1 1H1q-1 0-1-1z" fill="url(#fo)" /><path d="M5 27v-5q0-2 2-2h16q2 0 2 2v5z" fill="#1080d8" /><path d="M8 23.500h13" stroke="#0a4f94" /></svg>
        </Slot>
      </div>
      <svg className="ml-[472px]" width="16" height="20" viewBox="0 0 16 20"><rect width="16" height="20" rx="7" fill="#0a84ff" /><path d="M4.500 6.500l7 6.500L8 16.500v-13L11.500 7l-7 6.500" fill="none" stroke="#fff" strokeWidth="1.300" /></svg>
      <svg className="ml-[22px]" width="20" height="14" viewBox="0 0 20 14" fill="none" stroke="#333" strokeWidth="1.300"><rect x=".7" y=".7" width="18.600" height="12.600" rx="2" /><path d="M4 4.500h13M4 7.500h13" strokeDasharray="1.500 1.500" /><path d="M6 10.500h8" /></svg>
      <div className="ml-[23px] flex w-[30px] flex-col items-center text-[14px] leading-5"><Fit w={29}>ENG</Fit><Fit w={14}>IN</Fit></div>
      <svg className="ml-[21px]" width="21" height="15" viewBox="0 0 21 15" fill="none" stroke="#222" strokeWidth="1.400"><path d="M1 5.500q9.500-8.500 19 0M4 8.500q6.500-6 13 0M7 11.300q3.500-3.300 7 0" /><circle cx="10.500" cy="13" r="1.500" fill="#222" stroke="none" /></svg>
      <svg className="ml-[9px]" width="21" height="16" viewBox="0 0 21 16" fill="none" stroke="#333" strokeWidth="1.300"><path d="M1 5.500h3.500L9 1.500v13l-4.500-4H1zM12 5q2 3 0 6M14.500 3q4 5 0 10M17 1q6 7 0 14" /></svg>
      <svg className="ml-[10px]" width="21" height="17" viewBox="0 0 21 17"><rect x="1.700" y="4.700" width="16" height="10.600" rx="2.500" fill="none" stroke="#222" strokeWidth="1.400" /><path d="M4 7h12v6H4zM18.500 8.500h2v3h-2z" fill="#222" /><path d="M4 0L0 7h3l-1 4 5-7H4.500L6 0z" fill="#222" stroke="#dadada" strokeWidth=".6" /></svg>
      <div className="ml-[20px] flex w-[62px] flex-col items-end text-[14px] leading-5"><Fit w={62}>10:54 PM</Fit><Fit w={61}>8/7/2025</Fit></div>
      <svg className="ml-[11px]" width="18" height="21" viewBox="0 0 18 21"><path d="M2 9q0-6 6-7 6 1 6.500 7v4l2 2.500H0L2 13zM5 17.500h6q-1 2.500-3 2.500t-3-2.500z" fill="#1a1a1a" /><path d="M7 8h4l-4 5h4" stroke="#dadada" strokeWidth="1.300" fill="none" /><path d="M12.500 1.500h4l-4 5h4" stroke="#1a1a1a" strokeWidth="1.300" fill="none" /></svg>
    </footer>
  );
}

export default function App() {
  return (
    <div className="flex h-[1080px] w-[1920px] flex-col overflow-hidden bg-white font-['Noto_Sans','Open_Sans',sans-serif]">
      <TitleBar />
      <Ribbon />
      <main className="flex h-[790px] shrink-0 border-b border-[#e1dfdd]">
        <LeftNav />
        <div className="flex w-[1418px] shrink-0 flex-col">
          <div className="flex h-[746px] shrink-0">
            <Canvas />
            <FiltersPane />
          </div>
          <PageTabs />
        </div>
        <VisualizationsPane />
        <DataPane />
      </main>
      <StatusBar />
      <Taskbar />
    </div>
  );
}
